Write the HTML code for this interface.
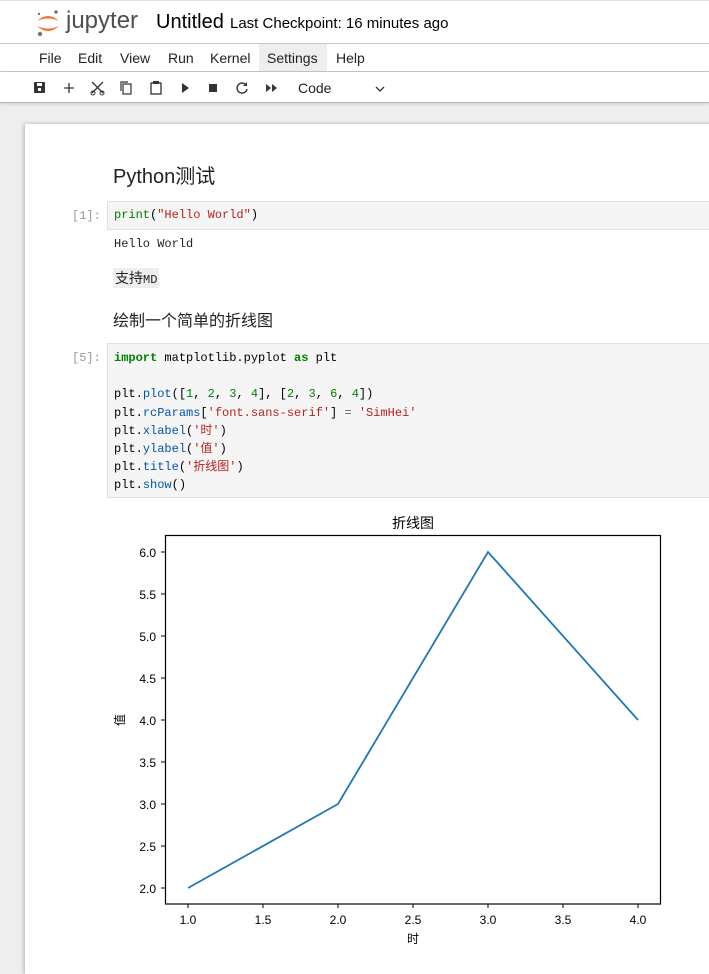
<!DOCTYPE html>
<html><head><meta charset="utf-8"><style>
*{margin:0;padding:0;box-sizing:border-box}
body{width:709px;height:959px;overflow:hidden;background:#eee;font-family:"Liberation Sans","Noto Sans CJK SC",sans-serif;position:relative}
.hdr{position:absolute;left:0;top:0;width:709px;height:44px;background:#fff;border-top:1px solid #e0e0e0;border-bottom:1px solid #c8c8c8}
.menu{position:absolute;left:0;top:44px;width:709px;height:28px;background:#fff;border-bottom:1px solid #c8c8c8;font-size:14px;color:#222}
.menu span{position:absolute;top:0;height:27px;line-height:28px}
.tb{position:absolute;left:0;top:72px;width:709px;height:31px;background:#fff;border-bottom:1px solid #bbb;box-shadow:0 1px 3px rgba(0,0,0,.15)}
.nb{position:absolute;left:25px;top:124px;width:700px;height:850px;background:#fff;box-shadow:-1px 0 4px rgba(0,0,0,.25)}
.mono{font-family:"Liberation Mono","Noto Sans CJK SC",monospace;font-size:12px}
.p{position:absolute}
.cell{position:absolute;left:107px;width:610px;background:#f5f5f5;border:1px solid #e0e0e0}
.prompt{position:absolute;color:#999;font-family:"Liberation Mono",monospace;font-size:12px}
.k{color:#008000;font-weight:bold}.s{color:#ba2121}.n{color:#008000}.f{color:#0055aa}.o{color:#666}
</style></head><body>
<div class="hdr">
<svg class="p" style="left:35px;top:8px" width="26" height="28" viewBox="0 0 26 28">
<circle cx="21" cy="3" r="1.8" fill="#767677"/><circle cx="5" cy="25" r="2.2" fill="#767677"/><circle cx="4" cy="5" r="1.2" fill="#767677"/>
<path d="M2 12 Q13 2 24 12 Q13 7 2 12Z" fill="#f37726"/><path d="M2 17 Q13 27 24 17 Q13 22 2 17Z" fill="#f37726"/></svg>
<div class="p" style="left:66px;top:6px;font-size:24px;color:#4e4e4e">jupyter</div>
<div class="p" style="left:156px;top:10px;font-size:20px;color:#000">Untitled</div>
<div class="p" style="left:230px;top:14px;font-size:15px;color:#000">Last Checkpoint: 16 minutes ago</div>
</div>
<div class="menu"><span style="left:39px">File</span><span style="left:78px">Edit</span><span style="left:120px">View</span><span style="left:168px">Run</span><span style="left:210px">Kernel</span><span style="left:259px;width:68px;background:#eee;padding-left:8px">Settings</span><span style="left:336px">Help</span></div>
<div class="tb">
<svg class="p" style="left:0;top:0" width="400" height="31" viewBox="0 0 400 31" fill="#333" stroke="#333">
<rect x="34" y="10" width="11" height="11" rx="1" stroke="none"/><rect x="37" y="11" width="5" height="3" fill="#fff" stroke="none"/><rect x="38" y="16" width="3" height="3" fill="#fff" stroke="none"/>
<path d="M69 11v10M64 16h10" stroke-width="1.3" fill="none"/>
<path d="M92 10l11 11M103 10l-11 11" stroke-width="1.3" fill="none"/><circle cx="93" cy="21" r="2" fill="none"/><circle cx="102" cy="21" r="2" fill="none"/>
<rect x="123" y="12" width="8" height="10" fill="none" stroke-width="1.2"/><path d="M121 19v-9h7" fill="none" stroke-width="1.2"/>
<rect x="151" y="11" width="10" height="11" fill="none" stroke-width="1.3"/><rect x="153" y="9" width="6" height="3" stroke="none"/>
<path d="M182 11l7 5-7 5z" stroke="none"/>
<rect x="209" y="12" width="8" height="8" stroke="none"/>
<path d="M246 13a5 5 0 1 0 1 4" fill="none" stroke-width="1.4"/><path d="M247 10v4h-4z" stroke="none"/>
<path d="M266 12l5 4-5 4zM272 12l5 4-5 4z" stroke="none"/>
<path d="M376 15l4 4 4-4" fill="none" stroke-width="1.3"/>
</svg>
<div class="p" style="left:298px;top:8px;font-size:14px;color:#222">Code</div>
</div>
<div class="nb"></div>
<div class="p" style="left:113px;top:160px;font-size:20px;color:#222">Python测试</div>
<div class="prompt" style="left:72px;top:209px">[1]:</div>
<div class="cell mono" style="top:201px;height:29px;padding:6px 0 0 6px"><span class="n">print</span>(<span class="s">"Hello World"</span>)</div>
<div class="p mono" style="left:114px;top:237px;color:#222">Hello World</div>
<div class="p" style="left:113px;top:268px;background:#eee;font-size:14px;padding:0 2px;color:#222">支持<span class="mono">MD</span></div>
<div class="p" style="left:113px;top:307px;font-size:16px;color:#222">绘制一个简单的折线图</div>
<div class="prompt" style="left:72px;top:351px">[5]:</div>
<div class="cell mono" style="top:343px;height:155px;padding:5px 0 0 6px;line-height:18.2px;white-space:pre"><span class="k">import</span> matplotlib.pyplot <span class="k">as</span> plt

plt.<span class="f">plot</span>([<span class="n">1</span>, <span class="n">2</span>, <span class="n">3</span>, <span class="n">4</span>], [<span class="n">2</span>, <span class="n">3</span>, <span class="n">6</span>, <span class="n">4</span>])
plt.<span class="f">rcParams</span>[<span class="s">'font.sans-serif'</span>] <span class="o">=</span> <span class="s">'SimHei'</span>
plt.<span class="f">xlabel</span>(<span class="s">'时'</span>)
plt.<span class="f">ylabel</span>(<span class="s">'值'</span>)
plt.<span class="f">title</span>(<span class="s">'折线图'</span>)
plt.<span class="f">show</span>()</div>
<svg class="p" style="left:0;top:0" width="709" height="959" font-family="'Liberation Sans','Noto Sans CJK SC',sans-serif" font-size="12" fill="#000">
<rect x="165.5" y="535.5" width="495" height="368.5" fill="none" stroke="#000" stroke-width="1.2"/>
<polyline points="188,888 338,804 488,552 638,720" fill="none" stroke="#1f77b4" stroke-width="1.8"/>
<g stroke="#000"><path d="M161 552h4M161 594h4M161 636h4M161 678h4M161 720h4M161 762h4M161 804h4M161 846h4M161 888h4"/>
<path d="M188 904v4M263 904v4M338 904v4M413 904v4M488 904v4M563 904v4M638 904v4"/></g>
<g text-anchor="end"><text x="156" y="557">6.0</text><text x="156" y="599">5.5</text><text x="156" y="641">5.0</text><text x="156" y="683">4.5</text><text x="156" y="725">4.0</text><text x="156" y="767">3.5</text><text x="156" y="809">3.0</text><text x="156" y="851">2.5</text><text x="156" y="893">2.0</text></g>
<g text-anchor="middle"><text x="188" y="924">1.0</text><text x="263" y="924">1.5</text><text x="338" y="924">2.0</text><text x="413" y="924">2.5</text><text x="488" y="924">3.0</text><text x="563" y="924">3.5</text><text x="638" y="924">4.0</text>
<text x="413" y="943">时</text><text x="413" y="528" font-size="14">折线图</text></g>
<text x="0" y="0" transform="translate(124,720) rotate(-90)" text-anchor="middle">值</text>
</svg>
</body></html>
